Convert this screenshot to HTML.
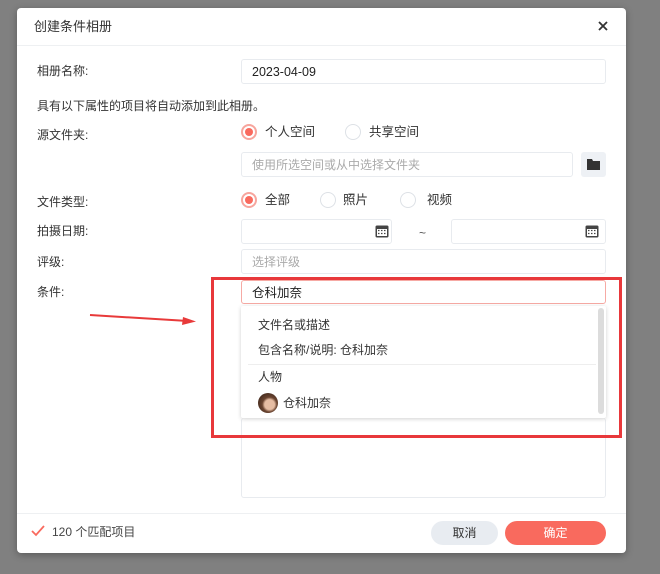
<!DOCTYPE html><html><head><meta charset="utf-8"><style>
*{box-sizing:border-box;margin:0;padding:0}
body{width:660px;height:574px;background:#808080;font-family:"Liberation Sans","Noto Sans CJK SC",sans-serif;font-size:12px;line-height:14px;color:#333;position:relative;overflow:hidden}
.a{position:absolute}
.dlg{left:17px;top:8px;width:609px;height:545px;background:#fff;border-radius:4px;box-shadow:0 2px 8px rgba(0,0,0,.3)}
.lbl{left:37px;font-size:12px;color:#333}
.in{border:1px solid #e8ebef;border-radius:3px;background:#fff}
.ph{color:#aaa}
.rad{width:16px;height:16px;border-radius:50%;border:1px solid #dde1e6;background:#fff}
.rad.on{border:2px solid #f7a59d}
.rad.on::after{content:"";position:absolute;left:2px;top:2px;width:8px;height:8px;border-radius:50%;background:#f96a5e}
</style></head><body>
<div class="a dlg"></div>
<div class="a" style="left:34px;top:19px;font-size:13px;line-height:15px;color:#333">创建条件相册</div>
<svg class="a" style="left:598px;top:21px" width="10" height="10"><path d="M1 1l8 8M9 1l-8 8" stroke="#333" stroke-width="1.8"/></svg>
<div class="a" style="left:17px;top:45px;width:609px;height:1px;background:#eef0f2"></div>

<div class="a lbl" style="top:64px">相册名称:</div>
<div class="a in" style="left:241px;top:59px;width:365px;height:25px"></div>
<div class="a" style="left:252px;top:65px;font-size:12.5px;color:#222">2023-04-09</div>

<div class="a lbl" style="top:99px">具有以下属性的项目将自动添加到此相册。</div>

<div class="a lbl" style="top:128px">源文件夹:</div>
<div class="a rad on" style="left:241px;top:124px"></div>
<div class="a" style="left:265px;top:125px;font-size:12.5px">个人空间</div>
<div class="a rad" style="left:345px;top:124px"></div>
<div class="a" style="left:369px;top:125px;font-size:12.5px">共享空间</div>
<div class="a in" style="left:241px;top:152px;width:332px;height:25px"></div>
<div class="a ph" style="left:252px;top:158px">使用所选空间或从中选择文件夹</div>
<div class="a" style="left:581px;top:152px;width:25px;height:25px;background:#eef1f5;border-radius:3px"></div>
<svg class="a" style="left:586px;top:157px" width="15" height="14" viewBox="0 0 15 14"><path d="M1 2h5l1 2h7v9H1z" fill="#333"/></svg>

<div class="a lbl" style="top:195px">文件类型:</div>
<div class="a rad on" style="left:241px;top:192px"></div>
<div class="a" style="left:265px;top:193px;font-size:12.5px">全部</div>
<div class="a rad" style="left:320px;top:192px"></div>
<div class="a" style="left:343px;top:193px;font-size:12.5px">照片</div>
<div class="a rad" style="left:400px;top:192px"></div>
<div class="a" style="left:427px;top:193px;font-size:12.5px">视频</div>

<div class="a lbl" style="top:224px">拍摄日期:</div>
<div class="a in" style="left:241px;top:219px;width:151px;height:25px"></div>
<svg class="a" style="left:375px;top:225px" width="14" height="13"><rect x="0.5" y="0.5" width="13" height="12" rx="1.5" fill="#444"/><rect x="2" y="4" width="10" height="7" fill="#fff"/><path d="M3 5.5h1.5M6 5.5h1.5M9 5.5h1.5M3 8.5h1.5M6 8.5h1.5M9 8.5h1.5" stroke="#444" stroke-width="1.3"/></svg>
<div class="a" style="left:419px;top:226px;color:#555">~</div>
<div class="a in" style="left:451px;top:219px;width:155px;height:25px"></div>
<svg class="a" style="left:585px;top:225px" width="14" height="13"><rect x="0.5" y="0.5" width="13" height="12" rx="1.5" fill="#444"/><rect x="2" y="4" width="10" height="7" fill="#fff"/><path d="M3 5.5h1.5M6 5.5h1.5M9 5.5h1.5M3 8.5h1.5M6 8.5h1.5M9 8.5h1.5" stroke="#444" stroke-width="1.3"/></svg>

<div class="a lbl" style="top:255px">评级:</div>
<div class="a in" style="left:241px;top:249px;width:365px;height:25px"></div>
<div class="a ph" style="left:252px;top:255px">选择评级</div>

<div class="a lbl" style="top:285px">条件:</div>
<div class="a in" style="left:241px;top:418px;width:365px;height:80px;border-top:none"></div>
<div class="a" style="left:241px;top:280px;width:365px;height:24px;border:1px solid #f6aaa4;border-radius:3px"></div>
<div class="a" style="left:252px;top:286px;font-size:12.5px;color:#222">仓科加奈</div>
<div class="a" style="left:241px;top:306px;width:365px;height:112px;background:#fff;box-shadow:0 1px 4px rgba(0,0,0,.18);border-radius:2px"></div>
<div class="a" style="left:598px;top:308px;width:6px;height:106px;background:#dcdcdc;border-radius:3px"></div>
<div class="a" style="left:258px;top:318px">文件名或描述</div>
<div class="a" style="left:258px;top:343px">包含名称/说明: 仓科加奈</div>
<div class="a" style="left:248px;top:364px;width:348px;height:1px;background:#eee"></div>
<div class="a" style="left:258px;top:370px">人物</div>
<div class="a" style="left:258px;top:393px;width:20px;height:20px;border-radius:50%;background:radial-gradient(ellipse at 58% 58%,#e6bda3 0 30%,#6a4430 45%,#2a1a12 100%)"></div>
<div class="a" style="left:283px;top:396px">仓科加奈</div>

<div class="a" style="left:211px;top:277px;width:411px;height:161px;border:3px solid #e8383b"></div>
<svg class="a" style="left:88px;top:310px" width="112" height="18"><path d="M2 5 L100 11" stroke="#e83a3a" stroke-width="2"/><path d="M95 7 L108 11.5 L94 15z" fill="#e83a3a"/></svg>

<div class="a" style="left:17px;top:513px;width:609px;height:1px;background:#eef0f2"></div>
<svg class="a" style="left:31px;top:525px" width="14" height="12"><path d="M1 6l4 4 8-9" stroke="#f96a5e" stroke-width="1.8" fill="none"/></svg>
<div class="a" style="left:52px;top:525px;color:#444">120 个匹配项目</div>
<div class="a" style="left:431px;top:521px;width:67px;height:24px;border-radius:12px;background:#e8ecf1;text-align:center;line-height:24px;color:#333">取消</div>
<div class="a" style="left:505px;top:521px;width:101px;height:24px;border-radius:12px;background:#f96a5e;text-align:center;line-height:24px;color:#fff">确定</div>
</body></html>
